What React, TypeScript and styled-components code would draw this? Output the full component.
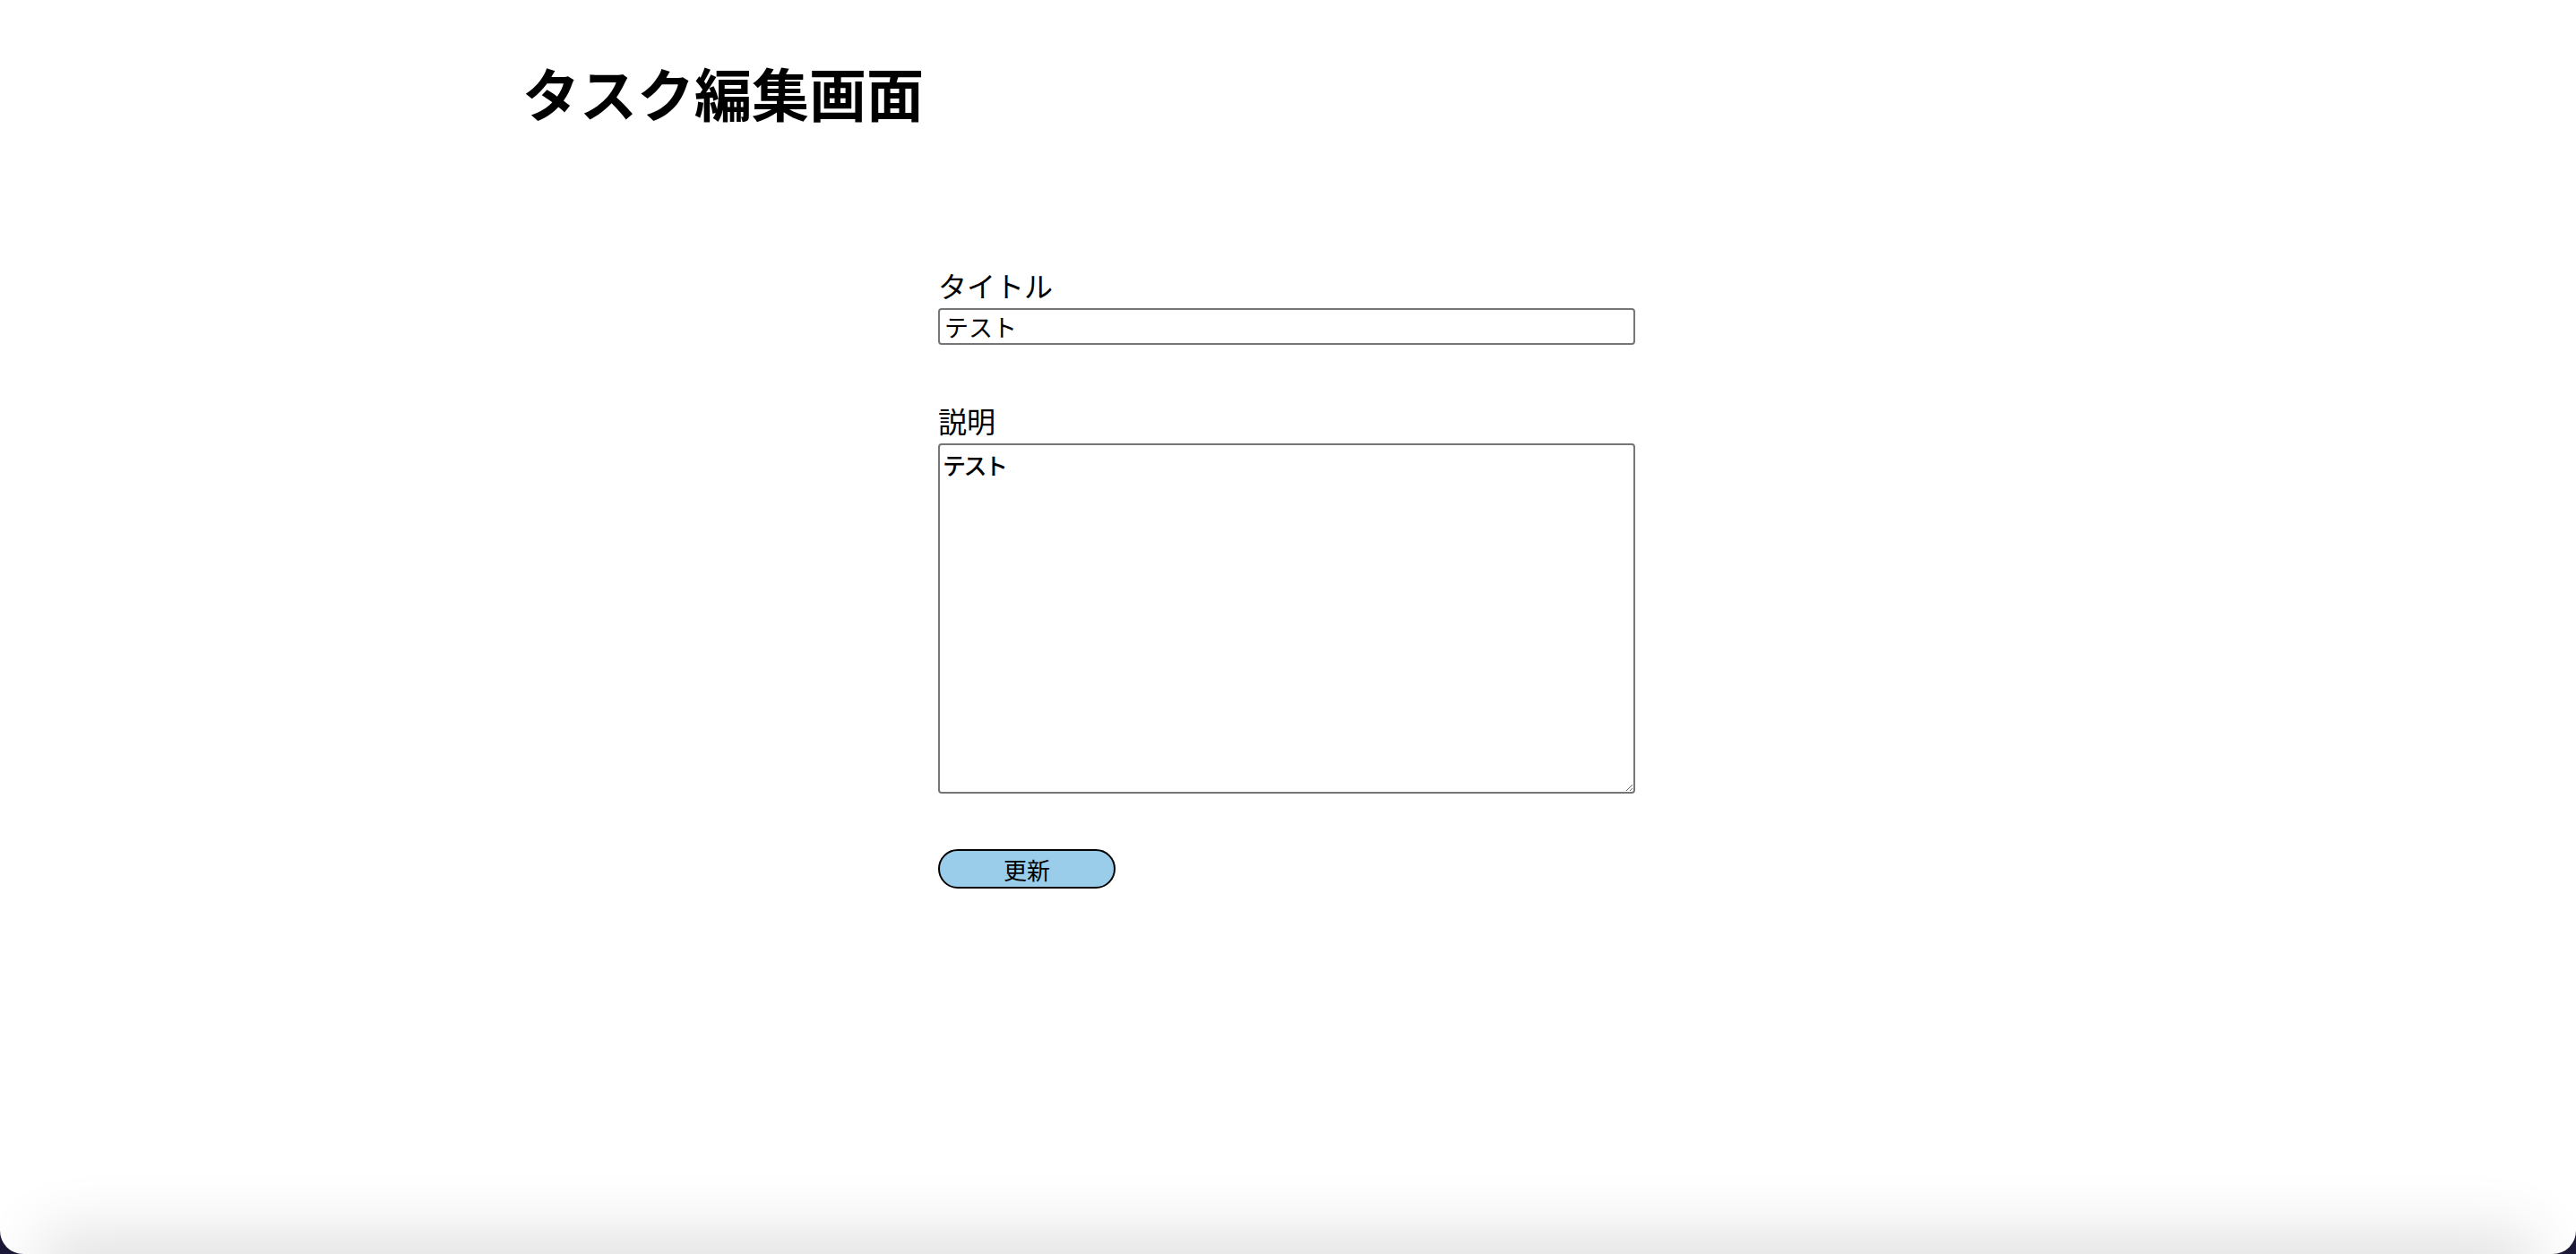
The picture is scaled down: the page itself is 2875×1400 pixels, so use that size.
import React from "react";
import styled, { createGlobalStyle } from "styled-components";

const Global = createGlobalStyle`
  html, body {
    margin: 0;
    padding: 0;
    background: #1b1736;
  }
  body {
    font-family: "Noto Sans CJK JP", "Noto Sans", sans-serif;
    color: #000;
  }
`;

const Window = styled.div`
  position: relative;
  height: 1400px;
  background: #ffffff;
  border-radius: 0 0 26px 26px;
  overflow: hidden;
  box-sizing: border-box;
  padding: 54px 0 0 583px;

  &::after {
    content: "";
    position: absolute;
    left: 70px;
    right: 70px;
    bottom: -40px;
    height: 40px;
    box-shadow: 0 0 70px 24px rgba(0, 0, 0, 0.12);
    pointer-events: none;
  }
`;

const Heading = styled.h1`
  margin: 0;
  font-size: 64px;
  font-weight: 700;
  line-height: 96px;
  letter-spacing: 0;
`;

const Form = styled.form`
  margin: 148px 0 0 464px;
  width: 778px;
  display: flex;
  flex-direction: column;
`;

const Field = styled.div<{ $gap: number }>`
  display: flex;
  flex-direction: column;
  margin-bottom: ${(p) => p.$gap}px;
`;

const Label = styled.label`
  font-size: 32px;
  line-height: 40px;
  margin-bottom: 6px;
`;

const TextInput = styled.input`
  box-sizing: border-box;
  width: 778px;
  height: 41px;
  border: 2px solid #767676;
  border-radius: 4px;
  padding: 0 5px;
  font-family: "Noto Sans CJK JP", sans-serif;
  font-size: 27px;
  color: #000;
  outline: none;
`;

const TextArea = styled.textarea`
  box-sizing: border-box;
  width: 778px;
  height: 391px;
  border: 2px solid #767676;
  border-radius: 4px;
  padding: 4px 3px;
  font-family: "Noto Sans CJK JP", monospace;
  font-size: 26px;
  font-weight: 500;
  letter-spacing: -2.5px;
  line-height: 36px;
  color: #000;
  outline: none;
`;

const SubmitButton = styled.button`
  box-sizing: border-box;
  width: 198px;
  height: 44px;
  background: #99cde9;
  border: 2px solid #000;
  border-radius: 22px;
  font-family: "Noto Sans CJK JP", sans-serif;
  font-size: 26px;
  color: #000;
  padding: 0;
  cursor: pointer;
`;

export default function App() {
  return (
    <>
      <Global />
      <Window>
        <Heading>タスク編集画面</Heading>
        <Form onSubmit={(e) => e.preventDefault()}>
          <Field $gap={64}>
            <Label htmlFor="title">タイトル</Label>
            <TextInput id="title" defaultValue="テスト" />
          </Field>
          <Field $gap={62}>
            <Label htmlFor="desc">説明</Label>
            <TextArea id="desc" defaultValue="テスト" />
          </Field>
          <div>
            <SubmitButton type="submit">更新</SubmitButton>
          </div>
        </Form>
      </Window>
    </>
  );
}
